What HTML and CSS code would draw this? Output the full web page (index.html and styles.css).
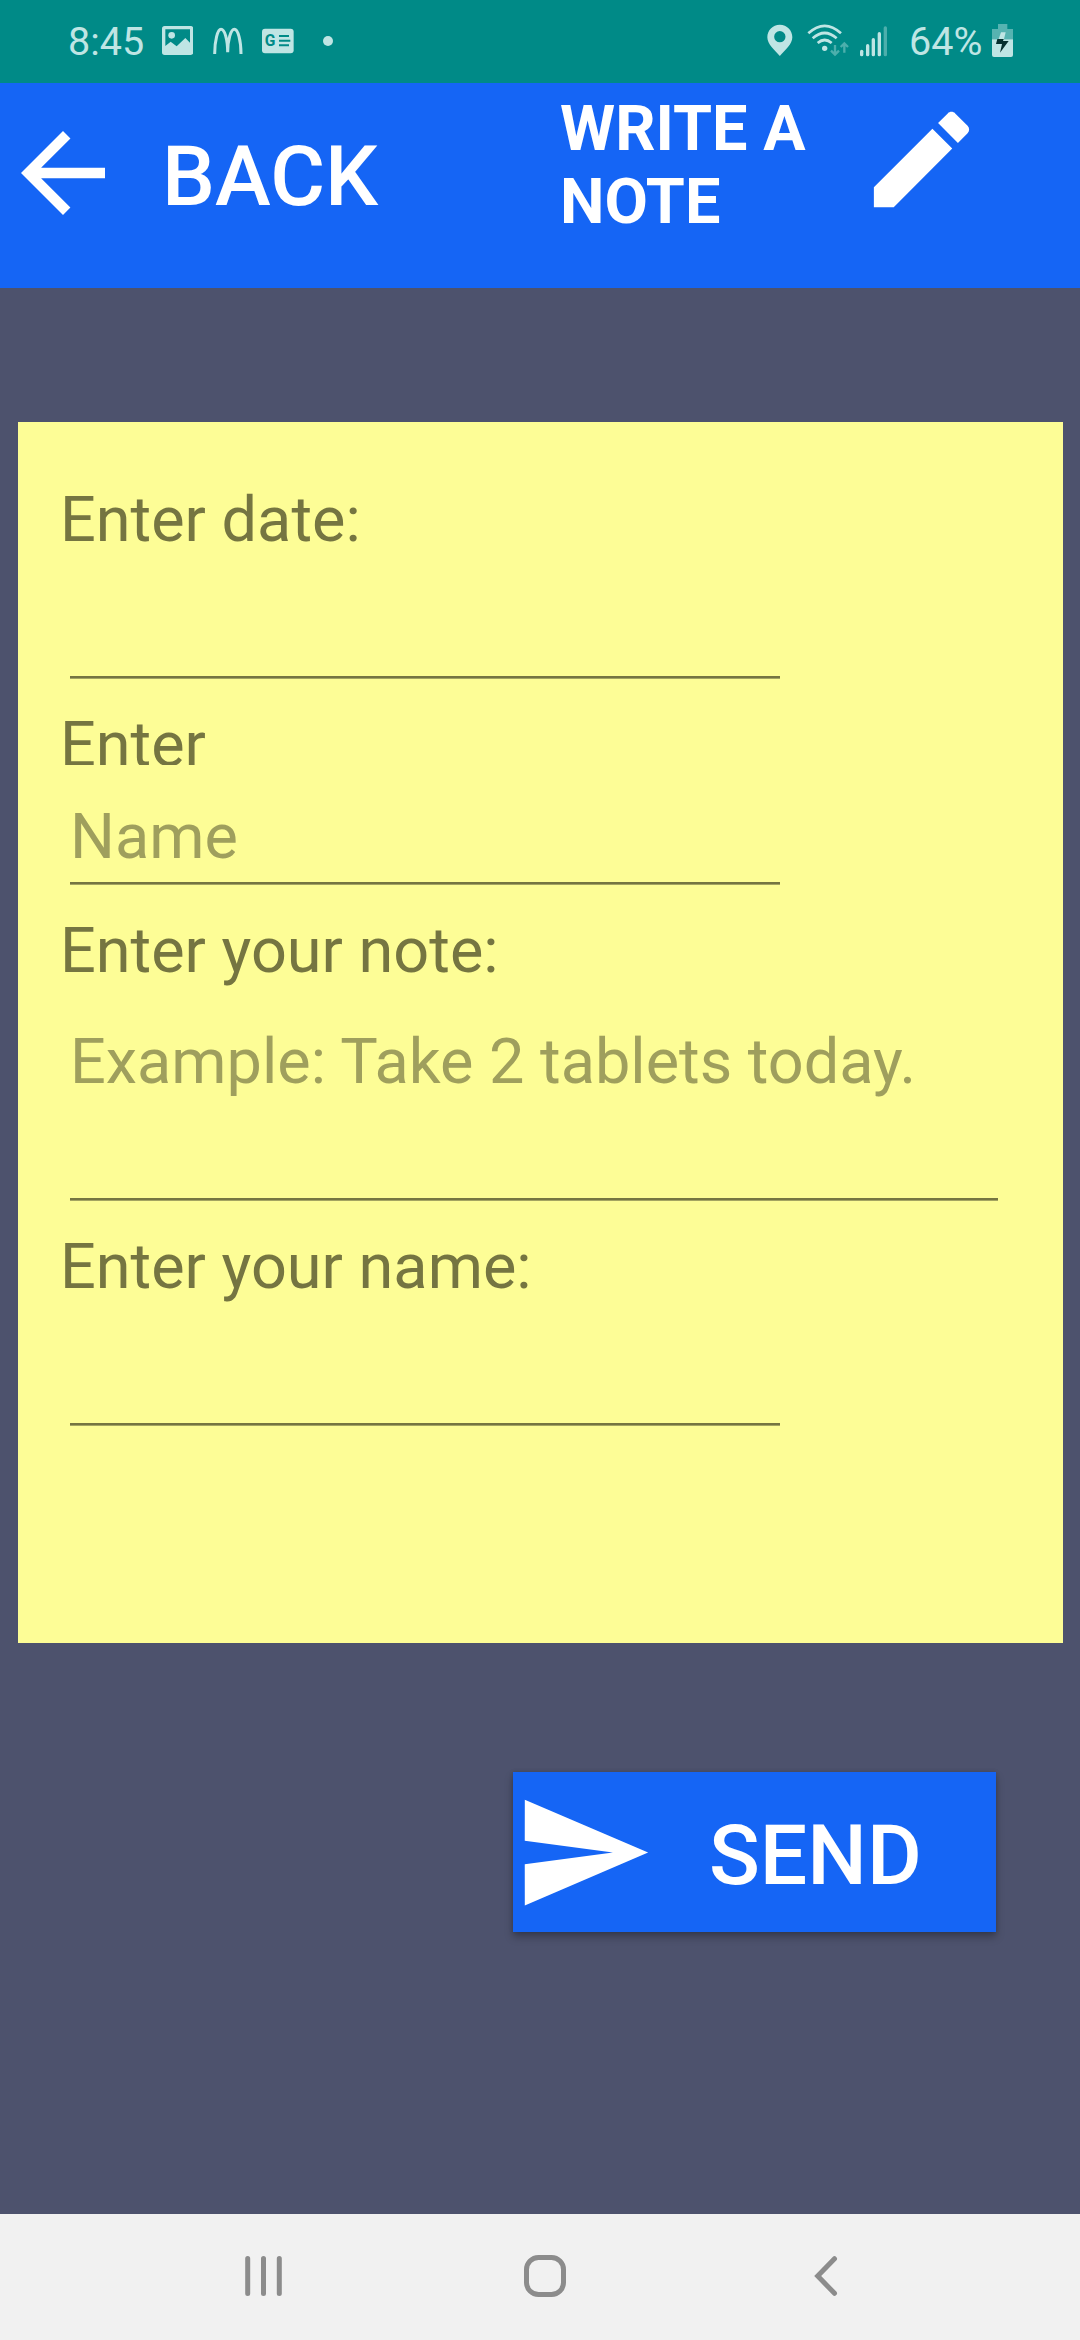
FILE: index.html
```html
<!DOCTYPE html>
<html lang="en">
<head>
<meta charset="utf-8">
<title>Write a note</title>
<link rel="stylesheet" href="styles.css">
</head>
<body>
<div class="screen">
  <div class="status">
    <span class="clock">8:45</span>
    <svg class="s-photo" viewBox="337 0 94 249" width="31.33" height="83">
      <path fill="currentColor" fill-rule="evenodd" d="M345 78h78a8 8 0 0 1 8 8v71a8 8 0 0 1-8 8h-78a8 8 0 0 1-8-8V86a8 8 0 0 1 8-8zM347 88v50l16-13 18 14 26-25 14 14V88z"/>
      <circle cx="366" cy="106" r="10" fill="currentColor"/>
    </svg>
    <svg class="s-arches" viewBox="490 0 90 249" width="30" height="83">
      <path fill="none" stroke="currentColor" stroke-width="9" d="M495 162C495 122 504 88 514 88C525 88 534 118 534 157C534 118 544 88 554 88C565 88 574 122 574 162"/>
    </svg>
    <svg class="s-news" viewBox="637 0 95 249" width="31.67" height="83">
      <rect x="637" y="86" width="95" height="74" rx="9" fill="currentColor"/>
      <text x="645" y="139" class="news-g">G</text>
      <path stroke="#008a87" stroke-width="6" d="M688 108h30M688 122h34M688 136h30"/>
    </svg>
    <span class="dot"></span>
    <span class="spacer"></span>
    <svg class="s-pin" viewBox="77 0 78 249" width="26" height="83">
      <path fill="currentColor" fill-rule="evenodd" d="M115.500 74C94 74 78 91 78 111.500C78 132 100 150 115.500 168C131 150 153 132 153 111.500C153 91 137 74 115.500 74zM115.500 93a17 17 0 1 1 0 34a17 17 0 0 1 0-34z"/>
    </svg>
    <svg class="s-wifi" viewBox="197 0 126 249" width="42" height="83">
      <g fill="none" stroke="currentColor" stroke-width="8">
        <path d="M201 100Q250 55 299 100"/>
        <path d="M214 115Q250 83 286 115"/>
        <path d="M229 129Q250 111 271 129"/>
      </g>
      <circle cx="250" cy="145" r="8" fill="currentColor"/>
      <path class="dim" d="M281 135v28M269 152l12 12 12-12M309 158v-28M298 141l11-11 11 11"/>
    </svg>
    <svg class="s-signal" viewBox="357 0 82 249" width="27.33" height="83">
      <g fill="currentColor">
        <rect x="357" y="149" width="10" height="20" rx="5"/>
        <rect x="375" y="132" width="10" height="37" rx="5"/>
        <rect x="392" y="114" width="10" height="55" rx="5"/>
        <rect x="410" y="96" width="10" height="73" rx="5"/>
        <rect x="428" y="79" width="10" height="90" rx="5" opacity=".4"/>
      </g>
    </svg>
    <span class="percent">64%</span>
    <svg class="s-battery" viewBox="756 0 63 249" width="21" height="83">
      <path fill="currentColor" opacity=".45" d="M774 72h28v15h17v31h-63V87h18z"/>
      <path fill="currentColor" d="M756 118h63v47a6 6 0 0 1-6 6h-51a6 6 0 0 1-6-6z"/>
      <path fill="currentColor" d="M783 97h14l-5 20h-16z"/>
      <path fill="#06302f" d="M772 117h19l-2 6h17l-26 35 6-26h-18z"/>
    </svg>
  </div>

  <header class="header">
    <div class="back">
      <svg viewBox="0 0 24 24" width="126" height="126"><path fill="#fff" d="M20 11H7.830l5.590-5.590L12 4l-8 8 8 8 1.410-1.410L7.830 13H20v-2z"/></svg>
      <span class="button-text">BACK</span>
    </div>
    <h1 class="title">WRITE A NOTE</h1>
    <svg class="pencil" viewBox="0 0 24 24" width="127" height="127"><path fill="#fff" d="M3 17.250V21h3.750L17.810 9.940l-3.750-3.750L3 17.250zM20.710 7.040c.39-.39.39-1.020 0-1.410l-2.340-2.340c-.39-.39-1.020-.39-1.410 0l-1.830 1.830 3.750 3.750 1.830-1.830z"/></svg>
  </header>

  <main class="note">
    <div class="label">Enter date:</div>
    <div class="field field-date"></div>
    <div class="label label-clipped">Enter</div>
    <div class="field field-name">Name</div>
    <div class="label label-note">Enter your note:</div>
    <div class="field field-note">Example: Take 2 tablets today.</div>
    <div class="label label-sender">Enter your name:</div>
    <div class="field field-date"></div>
  </main>

  <div class="send">
    <svg viewBox="0 0 24 24" width="141" height="141"><path fill="#fff" d="M2.010 21L23 12 2.010 3 2 10l15 2-15 2z"/></svg>
    <span class="button-text">SEND</span>
  </div>

  <nav class="nav">
    <svg viewBox="0 0 37 42" width="37" height="42"><path class="nav-line" d="M2.700 3.500v35M18.500 3.500v35M34.300 3.500v35"/></svg>
    <svg class="nav-home" viewBox="0 0 42 42" width="42" height="42"><rect class="nav-line" x="2.500" y="2.500" width="37" height="37" rx="12"/></svg>
    <svg class="nav-back" viewBox="0 0 24 42" width="24" height="42"><path class="nav-line" d="M20.500 3.700L3.700 21l16.800 17.300"/></svg>
  </nav>
</div>
</body>
</html>
```
FILE: styles.css
```css
* {
  box-sizing: border-box;
}

body {
  margin: 0;
  font-family: Roboto, sans-serif;
}

.screen {
  display: flex;
  flex-direction: column;
  width: 1080px;
  height: 2340px;
  overflow: hidden;
  background: #4d526d;
}

.status {
  display: flex;
  align-items: center;
  height: 83px;
  padding: 0 67px 0 68px;
  background: #008a87;
  color: #bfe5e4;
  font-size: 39.5px;
  line-height: 85px;
  white-space: nowrap;
}

.status svg {
  flex: none;
}

.clock {
  width: 94px;
}

.s-arches {
  margin-left: 20px;
}

.s-news {
  margin-left: 19px;
}

.news-g {
  font: 700 47px Roboto, sans-serif;
  fill: #008a87;
}

.dot {
  width: 10px;
  height: 10px;
  margin: -2px 0 0 29px;
  border-radius: 50%;
  background: currentColor;
}

.spacer {
  flex: 1;
}

.s-wifi {
  margin-left: 14px;
}

.dim {
  fill: none;
  stroke: currentColor;
  stroke-width: 7;
  opacity: .4;
}

.s-signal {
  margin-left: 11px;
}

.percent {
  width: 72px;
  margin: 0 11px 0 22px;
}

.header {
  display: flex;
  align-items: flex-start;
  height: 205px;
  background: #1565f5;
  color: #fff;
}

.back {
  display: flex;
  align-items: center;
  width: 560px;
  margin-top: 27px;
}

.button-text {
  margin-left: 36px;
  padding-top: 8px;
  font-size: 84px;
  font-weight: 500;
  line-height: 98px;
}

.title {
  width: 298px;
  margin: 9px 0 0;
  font-size: 63px;
  font-weight: 700;
  line-height: 73px;
}

.pencil {
  margin-top: 13px;
}

.note {
  width: 1045px;
  height: 1221px;
  margin: 134px 0 0 18px;
  padding: 61px 42px 0;
  background: #fdfd96;
  color: #757541;
  font-size: 63px;
}

.label {
  height: 74px;
  line-height: 74px;
}

.field {
  width: 710px;
  margin-left: 10px;
  border-bottom: 2px solid #757541;
  box-shadow: 0 1px 0 #a4a461;
  line-height: 74px;
  color: #9f9f5d;
  white-space: nowrap;
}

.field-date {
  height: 121px;
}

.label-clipped {
  height: 57px;
  margin-top: 30px;
  overflow: hidden;
}

.field-name {
  height: 119px;
  padding-top: 35px;
}

.label-note,
.label-sender {
  margin-top: 30px;
}

.field-note {
  width: 928px;
  height: 212px;
  padding-top: 37px;
}

.send {
  display: flex;
  align-items: center;
  width: 483px;
  height: 160px;
  margin: 129px 0 0 513px;
  background: #1565f5;
  color: #fff;
  box-shadow: 0 5px 8px rgba(0, 0, 0, .28), 0 0 4px rgba(0, 0, 0, .15);
}

.send .button-text {
  margin-left: 55px;
}

.nav {
  display: flex;
  align-items: center;
  height: 126px;
  margin-top: auto;
  padding: 0 0 2px 245px;
  background: #f1f1f1;
}

.nav-home {
  margin-left: 242px;
}

.nav-back {
  margin-left: 248px;
}

.nav-line {
  fill: none;
  stroke: #8c8c8c;
  stroke-width: 5;
  stroke-linecap: round;
}
```
